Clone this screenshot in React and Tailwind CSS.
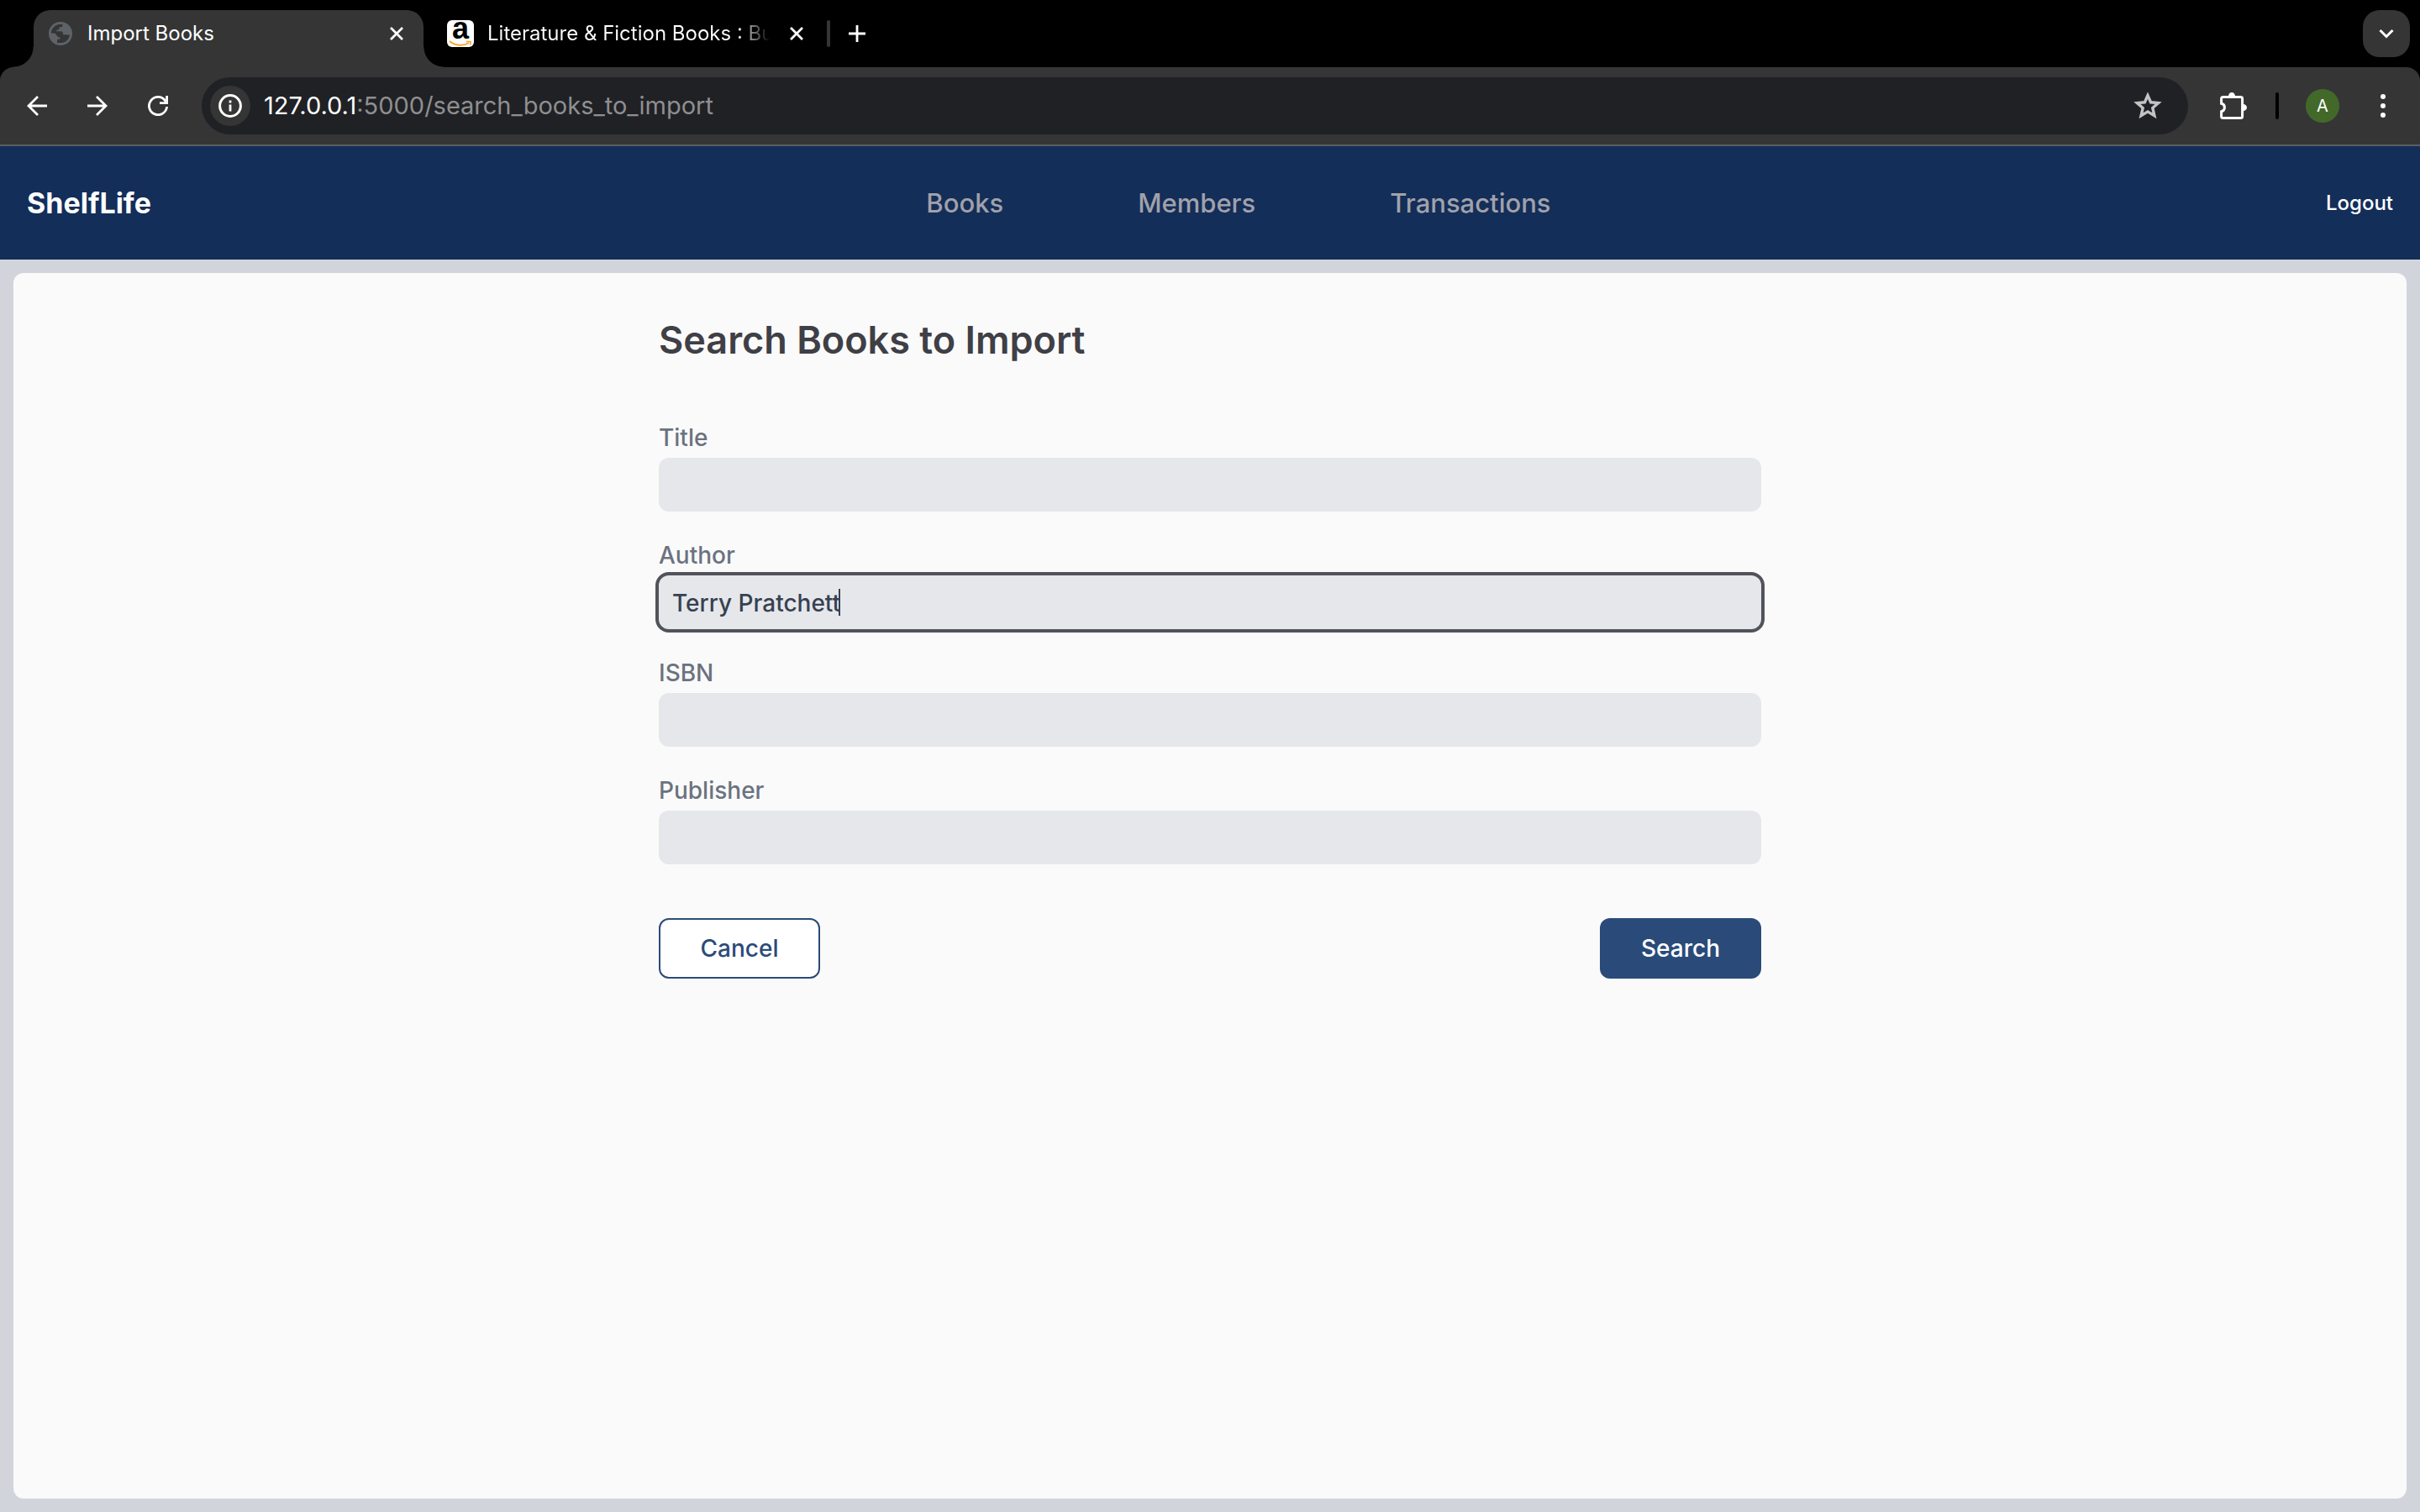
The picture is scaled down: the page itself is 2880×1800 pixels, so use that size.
import { useState } from "react";

const stroke = { fill: "none", stroke: "currentColor", strokeLinecap: "butt" };

function GlobeIcon() {
  return (
    <svg viewBox="0 0 28 28" className="size-7 shrink-0 text-[#5f6368]" aria-hidden="true">
      <circle cx="14" cy="14" r="14" fill="currentColor" />
      <path
        d="M2.8 13.6C2.9 8.2 6.8 3.9 12 2.9H16.4V4.4C16.4 5.6 15.6 6.2 14.4 6.2H12.6V8C12.6 9 11.8 9.6 10.8 9.6H9.4V11.2H14.6C16.2 11.2 17 12.2 17 13.6V15.2H20.6C22 15.2 22.6 15.8 25 15.4C24.4 20.4 20.4 24.6 15.2 25.1H10V22.6C10 21.4 10.8 20.6 12 20.6H13.6V18.4H12.2C9.4 18.4 9.2 13.6 6.4 13.6Z"
        fill="#353535"
      />
    </svg>
  );
}

function AmazonIcon() {
  return (
    <span className="flex size-8 shrink-0 flex-col items-center rounded-md bg-white">
      <span className="h-6 font-['Liberation_Sans',sans-serif] text-[36px] leading-[20px] font-bold text-black">a</span>
      <svg viewBox="0 0 28 8" className="h-2 w-7" aria-hidden="true">
        <path d="M1 1C8 7 18 7 24 3" fill="none" stroke="#f9a42d" strokeWidth="2" />
        <path d="M21 1.5H26V5.5" fill="none" stroke="#f9a42d" strokeWidth="1.6" />
      </svg>
    </span>
  );
}

function CloseIcon() {
  return (
    <svg viewBox="0 0 16 16" className="size-4" aria-hidden="true">
      <path d="M1 1L15 15M15 1L1 15" {...stroke} strokeWidth="2.8" />
    </svg>
  );
}

function PlusIcon() {
  return (
    <svg viewBox="0 0 20 20" className="size-5" aria-hidden="true">
      <path d="M10 0V20M0 10H20" {...stroke} strokeWidth="2.8" />
    </svg>
  );
}

function ChevronIcon() {
  return (
    <svg viewBox="0 0 18 12" className="h-3 w-[18px]" aria-hidden="true">
      <path d="M1.5 2L9 9.5L16.5 2" {...stroke} strokeWidth="3" />
    </svg>
  );
}

function BackIcon() {
  return (
    <svg viewBox="0 0 24 24" className="size-6" aria-hidden="true">
      <path d="M24 12H2M13 1L2 12L13 23" {...stroke} strokeWidth="2.8" />
    </svg>
  );
}

function ForwardIcon() {
  return (
    <svg viewBox="0 0 24 24" className="size-6" aria-hidden="true">
      <path d="M0 12H22M11 1L22 12L11 23" {...stroke} strokeWidth="2.8" />
    </svg>
  );
}

function ReloadIcon() {
  return (
    <svg viewBox="0 0 24 24" className="size-6" aria-hidden="true">
      <path d="M22.6 13A10.6 10.6 0 1 1 20.6 5.8L22.6 8.6" {...stroke} strokeWidth="2.8" />
      <path d="M22.6 0V8.6H14" {...stroke} strokeWidth="2.8" />
    </svg>
  );
}

function InfoIcon() {
  return (
    <svg viewBox="0 0 28 28" className="size-7" aria-hidden="true">
      <circle cx="14" cy="14" r="12.4" {...stroke} strokeWidth="3" />
      <path d="M14 12.4V20.6M14 7.4V10.4" {...stroke} strokeWidth="2.8" />
    </svg>
  );
}

function StarIcon() {
  return (
    <svg viewBox="0 0 34 32" className="h-8 w-[34px]" aria-hidden="true">
      <path
        d="M17 3.6L20.6 11.8L29.6 12.6L22.8 18.5L24.9 27.7L17 22.9L9.1 27.7L11.2 18.5L4.4 12.6L13.4 11.8Z"
        {...stroke}
        strokeWidth="3.4"
      />
    </svg>
  );
}

function PuzzleIcon() {
  return (
    <svg viewBox="0 0 32 32" className="size-8" aria-hidden="true">
      <path
        d="M3.6 5.4H24.6C25.8 5.4 26.6 6.2 26.6 7.4V28.4C26.6 29.6 25.8 30.4 24.6 30.4H3.6C2.2 30.4 1.6 29.6 1.6 28.4V22.6A4.8 4.8 0 0 0 1.6 13.2V7.4C1.6 6.2 2.2 5.4 3.6 5.4Z"
        {...stroke}
        strokeWidth="3"
      />
      <path d="M10 4.4A4 4.4 0 0 1 18 4.4ZM27.6 14A4.4 4 0 0 1 27.6 22Z" fill="currentColor" />
    </svg>
  );
}

function MenuIcon() {
  return (
    <svg viewBox="0 0 8 28" className="h-7 w-2" fill="currentColor" aria-hidden="true">
      <circle cx="4" cy="3" r="3" />
      <circle cx="4" cy="14" r="3" />
      <circle cx="4" cy="25" r="3" />
    </svg>
  );
}

function IconButton({ label, className, children }) {
  return (
    <button type="button" aria-label={label} className={`flex shrink-0 items-center justify-center ${className}`}>
      {children}
    </button>
  );
}

function TabStrip() {
  return (
    <div className="flex h-20 items-end bg-black pr-3 pl-4 text-[24px] text-white">
      <div className="size-6 bg-[radial-gradient(circle_at_0_0,#000_23px,#353535_24px)]" />
      <div className="flex h-[68px] w-[464px] items-center rounded-t-[20px] bg-[#353535] pr-3 pb-3 pl-[18px]">
        <GlobeIcon />
        <span className="ml-[18px] flex-1 whitespace-nowrap">Import Books</span>
        <IconButton label="Close Import Books" className="size-10">
          <CloseIcon />
        </IconButton>
      </div>
      <div className="size-6 bg-[radial-gradient(circle_at_100%_0,#000_23px,#353535_24px)]" />
      <div className="flex h-[68px] flex-1 items-center pb-3 pl-1">
        <AmazonIcon />
        <span className="ml-4 w-[336px] bg-linear-to-r from-white from-88% to-transparent bg-clip-text whitespace-nowrap text-transparent">
          Literature &amp; Fiction Books : Bu
        </span>
        <IconButton label="Close Literature & Fiction Books" className="ml-3 size-10">
          <CloseIcon />
        </IconButton>
        <div className="ml-4 h-8 w-1 rounded-full bg-[#353535]" />
        <IconButton label="New tab" className="ml-3 size-10">
          <PlusIcon />
        </IconButton>
      </div>
      <IconButton label="Search tabs" className="mb-3 size-14 rounded-[20px] bg-[#353535]">
        <ChevronIcon />
      </IconButton>
    </div>
  );
}

function Toolbar() {
  return (
    <div className="bg-black">
      <div className="flex h-[94px] items-center rounded-t-2xl border-b-2 border-[#5e5e5e] bg-[#353535] pr-5 pl-5 text-white">
        <IconButton label="Back" className="size-12">
          <BackIcon />
        </IconButton>
        <IconButton label="Forward" className="ml-6 size-12">
          <ForwardIcon />
        </IconButton>
        <IconButton label="Reload" className="ml-6 size-12">
          <ReloadIcon />
        </IconButton>
        <div className="ml-7 flex h-[68px] flex-1 items-center rounded-full bg-[#202125] pr-6 pl-[10px]">
          <IconButton label="View site information" className="size-12 rounded-full bg-[#353535]">
            <InfoIcon />
          </IconButton>
          <span className="ml-4 flex-1 text-[29px] text-[#8f8f91]">
            <span className="text-white">127.0.0.1</span>:5000/search_books_to_import
          </span>
          <IconButton label="Bookmark this tab" className="size-12 text-[#c3c3c3]">
            <StarIcon />
          </IconButton>
        </div>
        <IconButton label="Extensions" className="ml-[30px] size-12">
          <PuzzleIcon />
        </IconButton>
        <div className="ml-[26px] h-8 w-1 rounded-full bg-black" />
        <IconButton label="Profile" className="ml-8 size-10 rounded-full bg-[#43692a] text-[20px]">
          A
        </IconButton>
        <IconButton label="Menu" className="ml-7 size-12">
          <MenuIcon />
        </IconButton>
      </div>
    </div>
  );
}

function NavBar() {
  return (
    <header className="flex h-[135px] items-center justify-between bg-[#132e59] px-8">
      <a href="#home" className="text-[34px] font-bold text-white">
        ShelfLife
      </a>
      <nav className="flex gap-40 pt-0.5 text-[31px] font-medium text-[#a1a1aa]">
        <a href="#books">Books</a>
        <a href="#members">Members</a>
        <a href="#transactions">Transactions</a>
      </nav>
      <a href="#logout" className="text-[24px] font-medium text-white">
        Logout
      </a>
    </header>
  );
}

function Field({ id, label, value, onChange, active }) {
  return (
    <div className="flex flex-col gap-1">
      <label htmlFor={id} className="self-start text-[28px] leading-10 font-medium text-[#6b7280]">
        {label}
      </label>
      <div className="relative">
        <input
          id={id}
          type="text"
          value={value}
          onChange={(event) => onChange(event.target.value)}
          className={`block h-16 w-full rounded-xl bg-[#e5e7eb] px-4 pt-0.5 text-[28px] font-medium text-[#374151] caret-transparent outline-none ${
            active ? "ring-4 ring-[#52525b]" : ""
          }`}
        />
        {active && <span className="absolute top-4 left-[214px] h-8 w-0.5 bg-[#374151]" />}
      </div>
    </div>
  );
}

const FIELDS = [
  { id: "title", label: "Title" },
  { id: "author", label: "Author" },
  { id: "isbn", label: "ISBN" },
  { id: "publisher", label: "Publisher" },
];

function SearchForm() {
  const [values, setValues] = useState({ title: "", author: "Terry Pratchett", isbn: "", publisher: "" });

  return (
    <form className="mx-auto w-full max-w-[1312px]" onSubmit={(event) => event.preventDefault()}>
      <h1 className="text-[45px] leading-[64px] font-semibold text-[#3f3f46]">Search Books to Import</h1>
      <div className="mt-16 flex flex-col gap-8">
        {FIELDS.map(({ id, label }) => (
          <Field
            key={id}
            id={id}
            label={label}
            value={values[id]}
            active={id === "author"}
            onChange={(value) => setValues({ ...values, [id]: value })}
          />
        ))}
      </div>
      <div className="mt-16 flex justify-between text-[28px] font-medium">
        <button type="button" className="h-[72px] w-48 rounded-xl border-2 border-[#2a4b79] bg-white text-[#2a4b79]">
          Cancel
        </button>
        <button type="submit" className="h-[72px] w-48 rounded-xl bg-[#2a4b79] text-white">
          Search
        </button>
      </div>
    </form>
  );
}

export default function App() {
  return (
    <div className="flex min-h-screen flex-col bg-[#d1d5db] font-[Inter,sans-serif]">
      <TabStrip />
      <Toolbar />
      <NavBar />
      <main className="m-4 flex-1 rounded-xl bg-[#fafafa] pt-12">
        <SearchForm />
      </main>
    </div>
  );
}
